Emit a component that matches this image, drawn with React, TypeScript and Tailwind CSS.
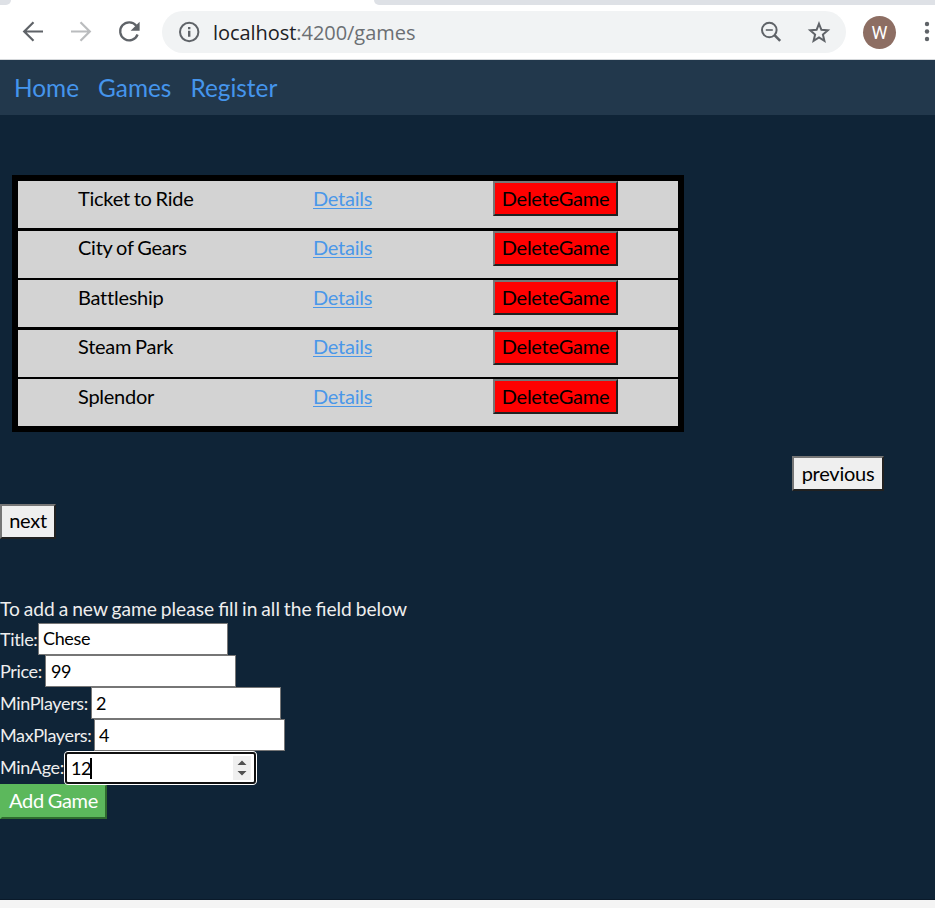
import React from 'react';

const games = [
  { title: 'Ticket to Ride', row: 'h-[50px] border-b-[3px] leading-[34px]', action: 'leading-[31px]' },
  { title: 'City of Gears', row: 'h-[49px] border-b-2 leading-[32px]', action: 'leading-[29px]' },
  { title: 'Battleship', row: 'h-[50px] border-b-[3px] leading-[34px]', action: 'leading-[31px]' },
  { title: 'Steam Park', row: 'h-[49px] border-b-2 leading-[32px]', action: 'leading-[29px]' },
  { title: 'Splendor', row: 'h-[47px] leading-[34px]', action: 'leading-[31px]' },
];

const fields = [
  { label: 'Title:', value: 'Chese', labelWidth: 'w-[38px]', box: 'w-[190px] pl-[4px] leading-[28px]' },
  { label: 'Price:', value: '99', labelWidth: 'w-[45px]', box: 'w-[191px] pl-[5px] leading-[30px]' },
  { label: 'MinPlayers:', value: '2', labelWidth: 'w-[91px]', box: 'w-[190px] pl-[4px] leading-[30px]' },
  { label: 'MaxPlayers:', value: '4', labelWidth: 'w-[94px]', box: 'w-[191px] pl-[4px] leading-[30px]' },
];

function Toolbar() {
  return (
    <header className="h-[60px] bg-white border-b border-[#d5d8db] flex flex-col">
      <div className="h-[5px] shrink-0 flex justify-between">
        <div className="w-[11px] bg-[#dee1e6] rounded-br-[10px]" />
        <div className="w-[561px] bg-[#dee1e6] rounded-bl-[9px]" />
      </div>
      <div className="h-[54px] flex items-center">
        <svg className="ml-[20px] w-[26px] h-[26px] shrink-0" viewBox="0 0 26 26" fill="none" stroke="#5f6368" strokeWidth="2.2">
          <path d="M23 12.5H4.5M13.5 3.2L4.2 12.5l9.3 9.3" />
        </svg>
        <svg className="ml-[22px] w-[26px] h-[26px] shrink-0" viewBox="0 0 26 26" fill="none" stroke="#babcbe" strokeWidth="2.2">
          <path d="M3 12.5h18.5M12.5 3.2l9.3 9.3-9.3 9.3" />
        </svg>
        <svg className="ml-[22px] w-[26px] h-[26px] shrink-0" viewBox="0 0 26 26" fill="none" stroke="#5f6368" strokeWidth="2.3">
          <path d="M20.3 6.8A9 9 0 1 0 21.6 15.5" />
          <path d="M23.6 2.8v9h-9z" fill="#5f6368" stroke="none" />
        </svg>
        <div className="ml-[20px] w-[684px] h-[42px] rounded-full bg-[#f1f3f4] flex items-center shrink-0">
          <svg className="ml-[16px] w-[22px] h-[22px]" viewBox="0 0 22 22" fill="none" stroke="#5f6368" strokeWidth="2">
            <circle cx="11.2" cy="11" r="9.2" />
            <path d="M11.2 9.8v6M11.2 6v2.2" strokeWidth="2.4" />
          </svg>
          <div className="ml-[13px] w-[210px] pt-px font-['Open_Sans'] text-[20px] leading-[30px] tracking-[-0.05px] text-[#6b6f73] whitespace-nowrap">
            <span className="text-[#202124]">localhost</span>:4200/games
          </div>
          <svg className="ml-[335px] w-[26px] h-[26px]" viewBox="0 0 26 26" fill="none" stroke="#5f6368" strokeWidth="2">
            <circle cx="11.3" cy="11" r="7.3" />
            <path d="M7.8 11h7" strokeWidth="1.6" />
            <path d="M16.5 16.2l5.7 5.7" strokeWidth="2.6" />
          </svg>
          <svg className="ml-[22px] w-[26px] h-[26px]" viewBox="0 0 26 26" fill="none" stroke="#5f6368" strokeWidth="2">
            <path d="M13 4.8l2.4 6 6.4.5-4.9 4.2 1.5 6.3-5.4-3.4-5.4 3.4 1.5-6.3-4.9-4.2 6.4-.5z" />
          </svg>
        </div>
        <div className="ml-[17px] w-[33px] h-[33px] shrink-0 rounded-full bg-[#8d6e63] text-white flex items-center justify-center font-[Roboto] text-[18px]">
          W
        </div>
        <svg className="ml-[25px] w-[12px] h-[26px] shrink-0" viewBox="0 0 12 26" fill="#5f6368">
          <circle cx="6" cy="5" r="2.2" />
          <circle cx="6" cy="12.5" r="2.2" />
          <circle cx="6" cy="20" r="2.2" />
        </svg>
      </div>
    </header>
  );
}

const bevel =
  'block border-2 border-t-[#767676] border-l-[#767676] border-r-[#212121] border-b-[#212121] h-[35px] text-[20px] tracking-[-0.25px] text-black text-center whitespace-nowrap';

export default function App() {
  return (
    <div className="w-[935px] h-[908px] overflow-hidden bg-[#f4f4f4] font-[Lato,sans-serif]">
      <Toolbar />
      <main className="h-[840px] bg-[#0f2437] border-b border-[#0a1a2a]">
        <nav className="h-[55px] bg-[#22384c] pl-[14px] flex gap-[19px] text-[24.4px] leading-[56px] text-[#4595ec]">
          <a>Home</a>
          <a>Games</a>
          <a>Register</a>
        </nav>
        <div className="mt-[60px] ml-[12px] w-[672px] h-[257px] border-[6px] border-black">
          {games.map((g) => (
            <div key={g.title} className={`${g.row} border-black bg-[#d3d3d3] flex items-start pl-[60px] text-[20px] tracking-[-0.25px] [word-spacing:-1px] text-black`}>
              <div className="w-[235px]">{g.title}</div>
              <div className="w-[180px]">
                <a className="text-[#4a97e9] underline decoration-1 underline-offset-2">Details</a>
              </div>
              <button className={`${bevel} ${g.action} w-[125px] bg-[#ff0000]`}>
                <span className="block h-[31px]">DeleteGame</span>
              </button>
            </div>
          ))}
        </div>
        <div className="mt-[24px] h-[48px] flex justify-end pr-[51px]">
          <button className={`${bevel} w-[92px] leading-[31px] bg-[#efefef]`}>previous</button>
        </div>
        <button className={`${bevel} w-[56px] bg-[#efefef]`}>
          <span className="block h-[31px] leading-[29px]">next</span>
        </button>
        <form className="mt-[56px] text-[#eeeeee]">
          <p className="h-[28px] text-[19.2px] leading-[28px] [word-spacing:-1px] whitespace-nowrap">To add a new game please fill in all the field below</p>
          {fields.map((f) => (
            <div key={f.label} className="flex h-[32px] text-[18px] tracking-[-0.36px]">
              <label className={`${f.labelWidth} shrink-0 leading-[33px] whitespace-nowrap`}>{f.label}</label>
              <div className={`${f.box} h-[32px] border border-[#767676] bg-white text-black`}>{f.value}</div>
            </div>
          ))}
          <div className="flex h-[33px] text-[18px] tracking-[-0.36px]">
            <label className="w-[64px] shrink-0 leading-[33px] whitespace-nowrap">MinAge:</label>
            <div className="w-[193px] h-[34px] rounded-[4px] border border-white bg-white shrink-0">
              <div className="h-[32px] rounded-[3px] border-2 border-[#101010] bg-white text-black flex items-center justify-between pl-[4px] pr-[3px]">
                <div className="flex items-center leading-[28px]">
                  12
                  <div className="w-[2px] h-[21px] bg-black -ml-px" />
                </div>
                <svg className="w-[18px] h-[24px] bg-[#efefef]" viewBox="0 0 18 24" fill="#505050">
                  <path d="M4.5 9l4.5-4.5L13.500 9zM4.500 15l4.500 4.500 4.500-4.500z" />
                </svg>
              </div>
            </div>
          </div>
          <button className="block w-[107px] h-[35px] border-2 border-[#5cb85c] border-r-[#2f6b2f] border-b-[#2f6b2f] bg-[#5cb85c] text-white text-[20px] tracking-[-0.3px] [word-spacing:-1px] whitespace-nowrap">
            <span className="block h-[31px] leading-[29px]">Add Game</span>
          </button>
        </form>
      </main>
    </div>
  );
}
